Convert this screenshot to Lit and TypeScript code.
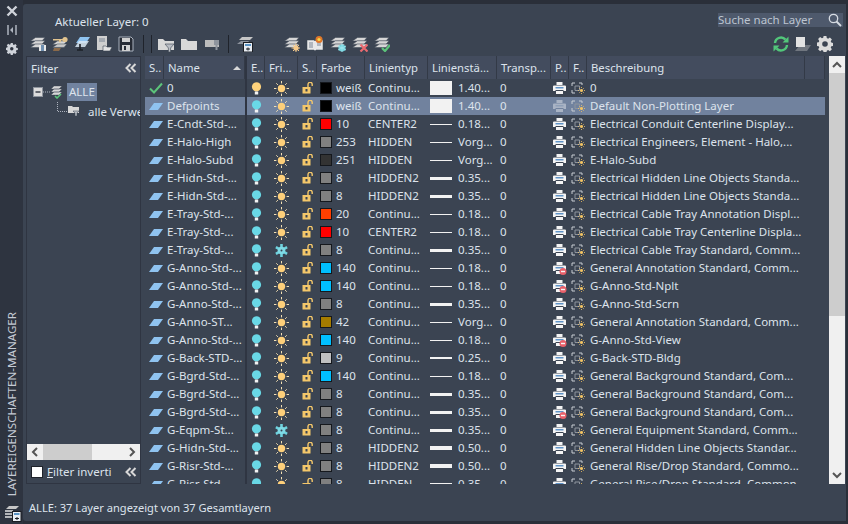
import { LitElement, html, css, svg } from 'lit';
import { customElement } from 'lit/decorators.js';

const icon = (w: number, h: number, body: unknown) =>
  html`<svg class="ico" width=${w} height=${h} viewBox="0 0 ${w} ${h}">${body}</svg>`;

const slab = (y: number, fill = '#d6d6d6') => svg`<path d="M5.5 ${y}h9.5l-3 3.4h-11.500z" fill=${fill} stroke="#3b4452" stroke-width=".5"/>`;
const stack = svg`${slab(1.5)}${slab(4.8)}${slab(8.100)}`;
const gearPath = 'M6.6 0h2.8l.4 2.1 1.3.6 1.8-1.2 2 2-1.2 1.8.6 1.3 2.1.4v2.8l-2.1.4-.6 1.3 1.2 1.8-2 2-1.8-1.2-1.3.6-.4 2.1H6.6l-.4-2.1-1.3-.6-1.8 1.2-2-2 1.2-1.8-.6-1.3-2.1-.4V6.6l2.1-.4.6-1.3-1.2-1.8 2-2 1.8 1.2 1.3-.6z';

// toolbar icons
const tbNewFilter = icon(16, 16, svg`${stack}<rect x="9" y="9" width="7" height="6" fill="#e8e8e8"/><rect x="11" y="9" width="3" height="6" fill="#6f8fb0"/>`);
const tbKey = icon(16, 16, svg`${slab(5)}${slab(8, '#c9c9c9')}<path d="M2 12h7l-2 3h-6z" fill="#8b6a4a"/><circle cx="13" cy="3.500" r="2.600" fill="#e2c48f"/><path d="M1 3h10v1.600h-2v1.600h-2v-1.600h-6z" fill="#e2c48f"/>`);
const tbState = icon(16, 16, svg`<path d="M6 1h10l-4 6h-10z" fill="#8fc3f0"/><path d="M5 5h10l-4 6h-10z" fill="#dbe9f5" opacity=".85"/><path d="M6 8v6M3 14h6" stroke="#1d2027" stroke-width="1.600"/>`);
const tbExport = icon(16, 16, svg`<rect x="1" y="0" width="10" height="14" fill="#cfcfcf"/><path d="M3 3h6M3 5h6" stroke="#7b8594"/><path d="M7 10h3l1 1h5l-2 4h-7z" fill="#e4e4e4" stroke="#3b4452" stroke-width=".6"/>`);
const tbSave = icon(16, 16, svg`<path d="M1 1h12l2 2v12h-14z" fill="#262b34" stroke="#a9b1bd"/><rect x="4" y="2" width="8" height="4" fill="#d0d0d0"/><rect x="4" y="9" width="8" height="6" fill="#d0d0d0"/><rect x="6" y="10" width="2" height="4" fill="#262b34"/>`);
const folder = svg`<path d="M0 3h5l2 2h9v9h-16z" fill="#d8d8d8"/>`;
const funnel = svg`<path d="M7 8h9l-3.400 4v4h-2.200v-4z" fill="#b9bdc4" stroke="#3b4452" stroke-width=".6"/>`;
const tbFolderFilter = icon(16, 16, svg`${folder}${funnel}`);
const tbFolder = icon(16, 16, folder);
const tbFolderBrush = icon(16, 16, svg`<path d="M1 4h14v7h-14z" fill="#bdbdbd"/><path d="M10 4h5v5h-1.500v5h-2v-5h-1.500z" fill="#8e949d"/>`);
const tbWindow = icon(16, 16, svg`<path d="M5 1h11l-3 3h-11z" fill="#c6c6c6"/><path d="M4 5h8l-2 3h-10z" fill="#8c929c"/><rect x="6.500" y="6.500" width="9" height="9.500" fill="#e9eef4" stroke="#1b1e24"/><rect x="8" y="8" width="6" height="2" fill="#5a93c4"/><path d="M9 13h4M11 11.500v3" stroke="#1b1e24"/>`);
const tbSun = icon(16, 16, svg`${stack}<circle cx="12" cy="12" r="2.600" fill="#f5c98a"/><path d="M12 7.500v9M7.500 12h9M9 9l6 6M15 9l-6 6" stroke="#f5c98a"/>`);
const tbBook = icon(18, 16, svg`<path d="M1 4h7l1 1 1-1h7v10h-7l-1 1-1-1h-7z" fill="#e8e8e8" stroke="#3b4452" stroke-width=".5"/><path d="M3 7h4M3 9h4M3 11h4M11 7h4M11 9h4" stroke="#7b8594"/><circle cx="13" cy="3.500" r="3.500" fill="#e0772a"/><circle cx="13" cy="3.500" r="1.600" fill="#f7d84a"/>`);
const tbSnow = icon(16, 16, svg`${stack}<circle cx="12" cy="12" r="3.600" fill="#6fd1dc"/><path d="M12 7.500v9M8 10l8 4M16 10l-8 4" stroke="#9fe4ec"/>`);
const tbX = icon(16, 16, svg`${stack}<path d="M8.500 8.500l7 7M15.500 8.500l-7 7" stroke="#ea6a6f" stroke-width="2.200"/>`);
const tbCheck = icon(16, 16, svg`${stack}<path d="M8 12l3 3 5-6" fill="none" stroke="#5cc47a" stroke-width="2.200"/>`);
const tbRefresh = icon(16, 16, svg`<path d="M2 7a6 6 0 0 1 10.500-3.400M14 9a6 6 0 0 1-10.500 3.400" fill="none" stroke="#52c67a" stroke-width="2.400"/><path d="M15.500 .5v6h-6zM.5 15.500v-6h6z" fill="#52c67a"/>`);
const tbCurrent = icon(16, 16, svg`<path d="M5 9h11l-4 6h-12z" fill="#70767f"/><rect x="1" y="1" width="9" height="10" fill="#e2e2e2"/>`);
const tbGear = icon(16, 16, svg`<path d=${gearPath} fill="#dcdcdc"/><circle cx="8" cy="8" r="2.800" fill="#3b4452"/>`);

// grid cell icons
const bulb = (c: string) => icon(11, 13, svg`<circle cx="5.500" cy="4.800" r="4.600" fill=${c}/><rect x="3.800" y="9.500" width="3.400" height="3" fill="#f2f2f2"/>`);
const sun = icon(15, 15, svg`<circle cx="7.500" cy="7.500" r="3.700" fill="#fdcf7a"/><path d="M7.500 0v2.400M7.500 12.600V15M0 7.500h2.400M12.600 7.500H15M2.300 2.300l1.600 1.600M11.100 11.100l1.600 1.600M12.700 2.300l-1.600 1.600M3.900 11.100l-1.600 1.600" stroke="#f4e0b4"/>`);
const snow = icon(15, 15, svg`<path d="M7.500 1v13M1.900 4.200l11.200 6.600M13.100 4.200L1.900 10.800" stroke="#6fd3df" stroke-width="2.600"/><circle cx="7.500" cy="7.500" r="3.800" fill="#7fdbe6"/><circle cx="7.500" cy="7.500" r="1" fill="#3b4452"/>`);
const lock = icon(12, 12, svg`<rect x="0.5" y="5" width="8" height="6.500" fill="#f4c76a"/><rect x="3.500" y="7" width="2" height="2.500" fill="#3b4452"/><path d="M6 5V2.400a2.100 2.100 0 0 1 4.200 0V4" fill="none" stroke="#f4c76a" stroke-width="1.400"/>`);
const printer = (c: string, strip: string, no = false) => icon(14, 13, svg`<rect x="3.500" y="0" width="6" height="3" fill=${c}/><path d="M1 3.500h11a1 1 0 0 1 1 1v4.500h-2.500v-1h-8v1h-2.500v-4.500a1 1 0 0 1 1-1z" fill=${c}/><rect x="2.500" y="5" width="8" height="1.500" fill=${strip}/><rect x="3" y="9" width="7" height="3" fill=${c}/>${no ? svg`<circle cx="10" cy="9.500" r="3.500" fill="#e8606a"/><rect x="8" y="8.800" width="4" height="1.400" fill="#f5f5f5"/>` : ''}`);
const vp = icon(14, 13, svg`<path d="M1 4V1h3M8 1h3v2M1 8v3h3" fill="none" stroke="#c9cdd3"/><path d="M4 4h4.500v4.500h-4.500z" fill="none" stroke="#8e949d"/><circle cx="10.500" cy="8.500" r="1.300" fill="#f3c463"/><path d="M10.500 5v7M7 8.500h7M8 6l5 5M13 6l-5 5" stroke="#f3c463" stroke-width=".8" stroke-dasharray="1 1"/>`);
const check = icon(14, 12, svg`<path d="M1 6.500l4 4 8-9" fill="none" stroke="#5cc47a" stroke-width="2"/>`);
const layerMark = icon(14, 7, svg`<path d="M5 0h9l-5 7h-9z" fill="#8fc3f0"/>`);
const chevrons = icon(12, 10, svg`<path d="M5.500 1L1.500 5l4 4M10.500 1L6.500 5l4 4" fill="none" stroke="#d8d8d8" stroke-width="2"/>`);

type Row = {
  n: string; on?: string; frozen?: boolean; c: string; cn: string; lt: string;
  lw: number; lwt: string; desc: string; no?: boolean;
};

const W = '#000000', GR = '#808080';
const rows: Row[] = [
  { n: '0', on: '#fdd27c', c: W, cn: 'weiß', lt: 'Continu...', lw: 14, lwt: '1.40...', desc: '0' },
  { n: 'Defpoints', c: W, cn: 'weiß', lt: 'Continu...', lw: 14, lwt: '1.40...', desc: 'Default Non-Plotting Layer' },
  { n: 'E-Cndt-Std-...', c: '#ff0000', cn: '10', lt: 'CENTER2', lw: 1, lwt: '0.18...', desc: 'Electrical Conduit Centerline Display...' },
  { n: 'E-Halo-High', c: '#808080', cn: '253', lt: 'HIDDEN', lw: 1, lwt: 'Vorg...', desc: 'Electrical Engineers, Element - Halo,...' },
  { n: 'E-Halo-Subd', c: '#333333', cn: '251', lt: 'HIDDEN', lw: 1, lwt: 'Vorg...', desc: 'E-Halo-Subd' },
  { n: 'E-Hidn-Std-...', c: GR, cn: '8', lt: 'HIDDEN2', lw: 3, lwt: '0.35...', desc: 'Electrical Hidden Line Objects Standa...' },
  { n: 'E-Hidn-Std-...', c: GR, cn: '8', lt: 'HIDDEN2', lw: 3, lwt: '0.35...', desc: 'Electrical Hidden Line Objects Standa...' },
  { n: 'E-Tray-Std-...', c: '#ff3f00', cn: '20', lt: 'Continu...', lw: 1, lwt: '0.18...', desc: 'Electrical Cable Tray Annotation Displ...' },
  { n: 'E-Tray-Std-...', c: '#ff0000', cn: '10', lt: 'CENTER2', lw: 1, lwt: '0.18...', desc: 'Electrical Cable Tray Centerline Displa...' },
  { n: 'E-Tray-Std-...', frozen: true, c: GR, cn: '8', lt: 'Continu...', lw: 3, lwt: '0.35...', desc: 'Electrical Cable Tray Standard, Comm...' },
  { n: 'G-Anno-Std-...', c: '#00bfff', cn: '140', lt: 'Continu...', lw: 1, lwt: '0.18...', desc: 'General Annotation Standard, Comm...', no: true },
  { n: 'G-Anno-Std-...', c: '#00bfff', cn: '140', lt: 'Continu...', lw: 1, lwt: '0.18...', desc: 'G-Anno-Std-Nplt', no: true },
  { n: 'G-Anno-Std-...', c: GR, cn: '8', lt: 'Continu...', lw: 3, lwt: '0.35...', desc: 'G-Anno-Std-Scrn' },
  { n: 'G-Anno-ST...', c: '#a57c00', cn: '42', lt: 'Continu...', lw: 1, lwt: 'Vorg...', desc: 'General Annotation Standard, Comm...' },
  { n: 'G-Anno-Std-...', c: '#00bfff', cn: '140', lt: 'Continu...', lw: 1, lwt: '0.18...', desc: 'G-Anno-Std-View', no: true },
  { n: 'G-Back-STD-...', c: '#c0c0c0', cn: '9', lt: 'Continu...', lw: 2, lwt: '0.25...', desc: 'G-Back-STD-Bldg' },
  { n: 'G-Bgrd-Std-...', c: '#00bfff', cn: '140', lt: 'Continu...', lw: 1, lwt: '0.18...', desc: 'General Background Standard, Com...' },
  { n: 'G-Bgrd-Std-...', c: GR, cn: '8', lt: 'Continu...', lw: 3, lwt: '0.35...', desc: 'General Background Standard, Com...' },
  { n: 'G-Bgrd-Std-...', c: GR, cn: '8', lt: 'Continu...', lw: 3, lwt: '0.35...', desc: 'General Background Standard, Com...', no: true },
  { n: 'G-Eqpm-St...', frozen: true, c: GR, cn: '8', lt: 'Continu...', lw: 3, lwt: '0.35...', desc: 'General Equipment Standard, Comm...' },
  { n: 'G-Hidn-Std-...', c: GR, cn: '8', lt: 'HIDDEN2', lw: 4, lwt: '0.50...', desc: 'General Hidden Line Objects Standar...' },
  { n: 'G-Risr-Std-...', c: GR, cn: '8', lt: 'HIDDEN2', lw: 4, lwt: '0.50...', desc: 'General Rise/Drop Standard, Commo...' },
  { n: 'G-Risr-Std', c: GR, cn: '8', lt: 'HIDDEN', lw: 3, lwt: '0.35...', desc: 'General Rise/Drop Standard, Common' },
];

@customElement('app-root')
export class AppRoot extends LitElement {
  static styles = css`
    :host {
      display: block;
      font-family: 'Noto Sans', 'Open Sans', sans-serif;
      font-size: 11.5px;
      color: #dde3ec;
    }
    .ico { display: block; flex: none; }
    .window { display: flex; width: 848px; height: 524px; background: #2a2f39; overflow: hidden; }

    .rail { width: 23px; flex: none; display: flex; flex-direction: column; align-items: center; background: #2e3440; }
    .rail-tools { display: flex; flex-direction: column; gap: 7px; padding-top: 5px; align-items: center; }
    .rail-title {
      margin-top: auto;
      writing-mode: vertical-rl;
      transform: rotate(180deg);
      white-space: nowrap;
      font-size: 11.6px;
      line-height: 14px;
      color: #c4cad4;
    }
    .rail-foot { margin: 9px 0 2px 3px; }

    .main {
      width: 823px;
      height: 517px;
      margin-top: 4px;
      padding: 0 5px 0 3px;
      box-sizing: border-box;
      background: #3b4452;
      border-radius: 3px 0 0 3px;
      display: flex;
      flex-direction: column;
    }
    .head { height: 28px; display: flex; align-items: flex-start; justify-content: space-between; flex: none; }
    .current { margin: 10px 0 0 29px; line-height: 16px; }
    .search {
      width: 125px;
      height: 14px;
      margin: 9px -2px 0 0;
      padding-right: 1px;
      box-sizing: border-box;
      background: #4e596c;
      color: #bcc4d0;
      line-height: 14px;
      display: flex;
      align-items: center;
      justify-content: space-between;
      white-space: nowrap;
    }
    .toolbar { height: 24px; flex: none; display: flex; align-items: center; gap: 6px; padding-left: 4px; }
    .sep { width: 1px; height: 18px; background: #1f232b; flex: none; }
    .seps { display: flex; gap: 7px; margin-left: 3px; }
    .group { display: flex; gap: 7px; }
    .sep-solo { margin-left: 2px; margin-right: 2px; }
    .toolbar .push { margin-left: auto; }
    .toolbar .end { margin-right: 8px; }
    .wide { margin-left: 19px; }

    .body { height: 428px; flex: none; display: flex; gap: 4px; }
    .filters {
      width: 115px;
      box-sizing: border-box;
      flex: none;
      border: 1px solid #2f3542;
      display: flex;
      flex-direction: column;
    }
    .filter-head {
      height: 22px;
      flex: none;
      background: #434c5e;
      display: flex;
      align-items: center;
      justify-content: space-between;
      padding: 0 3px 0 4px;
    }
    .tree { flex: 1; overflow: hidden; padding: 4px 0 0 6px; }
    .node { display: flex; align-items: center; height: 18px; white-space: nowrap; }
    .node-sel { background: #7183a0; padding: 0 2px; margin-left: 5px; line-height: 18px; }
    .node-child { margin-left: 24px; gap: 9px; margin-top: 1px; }
    .node-child span { width: 52px; overflow: hidden; flex: none; }
    .hscroll { height: 16px; flex: none; background: #f0f0f0; display: flex; align-items: center; justify-content: space-between; color: #555; }
    .hscroll .thumb { width: 49px; height: 16px; background: #cdcdcd; margin-right: auto; }
    .hscroll .arrow { width: 16px; display: flex; justify-content: center; flex: none; }
    .filter-foot { height: 23px; flex: none; display: flex; align-items: center; padding: 0 3px 0 4px; gap: 4px; white-space: nowrap; }
    .box { width: 10px; height: 10px; background: #fff; border: 1px solid #1f232b; flex: none; }
    .filter-foot u { text-decoration: underline; }
    .filter-foot .ico { margin-left: auto; }

    .grid { width: 680px; flex: none; height: 428px; overflow: hidden; }
    .row {
      display: grid;
      grid-template-columns: 19px 81px 2px 18px 33px 19px 48px 63px 69px 54px 18px 18px 218px 20px;
      height: 18px;
      line-height: 18px;
      white-space: nowrap;
    }
    .row > div { display: flex; align-items: center; overflow: hidden; min-width: 0; }
    .hdr { height: 23px; background: #434c5e; line-height: 23px; font-size: 11.3px; }
    .hdr > div { padding-left: 4px; box-shadow: inset -1px 0 0 #333a47; justify-content: space-between; }
    .hdr > .freeze { padding: 0; background: #2f3542; box-shadow: none; }
    .hdr .asc { width: 0; height: 0; border: 4px solid transparent; border-top: 0; border-bottom: 4px solid #d8d8d8; margin-right: 4px; }
    .rows { height: 405px; overflow: hidden; }
    .freeze { background: #2f3542; }
    .sel > div:not(.freeze) { background: #71829e; }
    .c { justify-content: center; }
    .status-i { padding-left: 3px; }
    .name { padding-left: 3px; }
    .swatch { width: 12px; height: 12px; box-sizing: border-box; border: 1px solid #15181d; margin: 0 4px 0 3px; flex: none; }
    .lt { padding-left: 3px; }
    .lw-line { width: 22px; background: #f2f2f2; margin: 0 6px 0 2px; flex: none; }
    .tr { padding-left: 3px; }
    .desc { padding-left: 3px; }

    .vscroll { width: 16px; flex: none; background: #f0f0f0; display: flex; flex-direction: column; }
    .vscroll .btn { height: 17px; display: flex; align-items: center; justify-content: center; flex: none; }
    .vscroll .thumb { height: 243px; background: #cdcdcd; flex: none; }
    .vscroll .btn.down { margin-top: auto; }

    .status { padding: 15px 0 0 3px; line-height: 18px; white-space: nowrap; font-size: 11.1px; }
  `;

  renderRow(r: Row, i: number) {
    return html`
      <div class="row ${i === 1 ? 'sel' : ''}">
        <div class="status-i c">${i === 0 ? check : layerMark}</div>
        <div class="name">${r.n}</div>
        <div class="freeze"></div>
        <div class="c">${bulb(r.on ?? '#69d8e6')}</div>
        <div class="c">${r.frozen ? snow : sun}</div>
        <div class="c">${lock}</div>
        <div><span class="swatch" style="background:${r.c}"></span>${r.cn}</div>
        <div class="lt">${r.lt}</div>
        <div><span class="lw-line" style="height:${r.lw}px"></span>${r.lwt}</div>
        <div class="tr">0</div>
        <div class="c">${i === 1 ? printer('#a9b3c4', '#8fa0b8') : printer('#f4f4f4', '#5f93c8', r.no)}</div>
        <div class="c">${vp}</div>
        <div class="desc">${r.desc}</div>
        <div></div>
      </div>
    `;
  }

  render() {
    return html`
      <div class="window">
        <div class="rail">
          <div class="rail-tools">
            ${icon(12, 12, svg`<path d="M1.500 1.500l9 9M10.500 1.500l-9 9" stroke="#cfd3da" stroke-width="2.400"/>`)}
            ${icon(10, 12, svg`<path d="M1 1v10M9 1v10" stroke="#aeb4bf" stroke-width="1.500"/><path d="M3 6l3-3v6z" fill="#aeb4bf"/>`)}
            ${icon(12, 12, svg`<g transform="scale(.72)"><path d=${gearPath} fill="#cfd3da"/><circle cx="8" cy="8" r="2.400" fill="#2e3440"/></g>`)}
          </div>
          <div class="rail-title">LAYEREIGENSCHAFTEN-MANAGER</div>
          <div class="rail-foot">
            ${icon(18, 17, svg`<path d="M5 1h10l-3 3h-10z" fill="#c6c6c6"/><path d="M1 6h8M1 9h8M1 12h8" stroke="#e0e0e0" stroke-width="1.600"/><rect x="8.500" y="6.500" width="8.500" height="10" fill="#e9eef4" stroke="#1b1e24"/><rect x="10" y="8" width="5.500" height="2" fill="#5a93c4"/><path d="M11 13.500h4M13 12v3" stroke="#1b1e24"/>`)}
          </div>
        </div>
        <div class="main">
          <div class="head">
            <div class="current">Aktueller Layer: 0</div>
            <div class="search">
              <span>Suche nach Layer</span>
              ${icon(14, 14, svg`<circle cx="5.500" cy="5.500" r="4.200" fill="none" stroke="#d6dbe2" stroke-width="1.300"/><path d="M8.500 8.500l4.500 4.500" stroke="#d6dbe2" stroke-width="1.800"/>`)}
            </div>
          </div>
          <div class="toolbar">
            ${tbNewFilter}${tbKey}${tbState}${tbExport}${tbSave}
            <span class="seps"><span class="sep"></span><span class="sep"></span></span>
            <span class="group">${tbFolderFilter}${tbFolder}${tbFolderBrush}</span>
            <span class="sep sep-solo"></span>
            ${tbWindow}
            <span class="wide"></span>
            ${tbSun}${tbBook}${tbSnow}${tbX}${tbCheck}
            <span class="push"></span>
            ${tbRefresh}${tbCurrent}<span class="end">${tbGear}</span>
          </div>
          <div class="body">
            <div class="filters">
              <div class="filter-head"><span>Filter</span>${chevrons}</div>
              <div class="tree">
                <div class="node">
                  ${icon(17, 11, svg`<rect x=".5" y=".5" width="9" height="9" fill="#dcdcdc" stroke="#8e949d"/><path d="M2.500 5h5" stroke="#30353f" stroke-width="1.400"/><path d="M10 5h7" stroke="#aeb4bf" stroke-dasharray="1 1"/>`)}
                  ${icon(12, 14, svg`<path d="M4 1h8l-3 3h-8zM4 4h8l-3 3h-8zM4 7h8l-3 3h-8z" fill="#d6d6d6" stroke="#3b4452" stroke-width=".4"/><path d="M5 11l2 2 4-4" fill="none" stroke="#5cc47a" stroke-width="1.600"/>`)}
                  <span class="node-sel">ALLE</span>
                </div>
                <div class="node node-child">
                  ${icon(22, 18, svg`<path d="M.5 0V9.500H11" fill="none" stroke="#aeb4bf" stroke-dasharray="1 1"/><path d="M11 4h4l1 1h6v6h-11z" fill="#d8d8d8"/><path d="M16 9h6l-2 2v3h-2v-3z" fill="#b9bdc4" stroke="#3b4452" stroke-width=".5"/>`)}
                  <span>alle Verwendeten</span>
                </div>
              </div>
              <div class="hscroll">
                <span class="arrow">${icon(8, 10, svg`<path d="M6 1L2 5l4 4" fill="none" stroke="#555" stroke-width="2"/>`)}</span>
                <span class="thumb"></span>
                <span class="arrow">${icon(8, 10, svg`<path d="M2 1l4 4-4 4" fill="none" stroke="#555" stroke-width="2"/>`)}</span>
              </div>
              <div class="filter-foot">
                <span class="box"></span><span><u>F</u>ilter inverti</span>${chevrons}
              </div>
            </div>
            <div class="grid">
              <div class="row hdr">
                <div>S..</div>
                <div>Name<span class="asc"></span></div>
                <div class="freeze"></div>
                <div>E..</div>
                <div>Fri...</div>
                <div>S..</div>
                <div>Farbe</div>
                <div>Linientyp</div>
                <div>Linienstä...</div>
                <div>Transp...</div>
                <div>P..</div>
                <div>F..</div>
                <div>Beschreibung</div>
                <div></div>
              </div>
              <div class="rows">${rows.map((r, i) => this.renderRow(r, i))}</div>
            </div>
            <div class="vscroll">
              <div class="btn">${icon(10, 7, svg`<path d="M1 6l4-4 4 4" fill="none" stroke="#555" stroke-width="2"/>`)}</div>
              <div class="thumb"></div>
              <div class="btn down">${icon(10, 7, svg`<path d="M1 1l4 4 4-4" fill="none" stroke="#555" stroke-width="2"/>`)}</div>
            </div>
          </div>
          <div class="status">ALLE: 37 Layer angezeigt von 37 Gesamtlayern</div>
        </div>
      </div>
    `;
  }
}
